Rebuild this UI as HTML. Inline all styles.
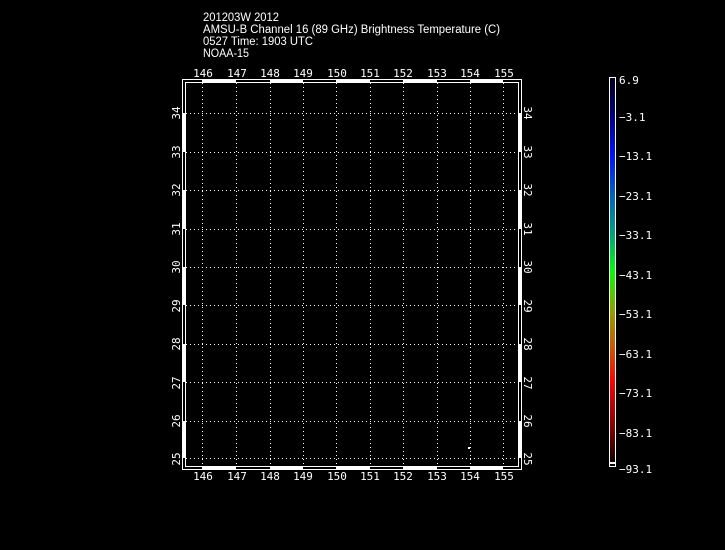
<!DOCTYPE html>
<html><head><style>
html,body{margin:0;padding:0;background:#000;width:725px;height:550px;overflow:hidden}
svg text{font-family:"DejaVu Sans Mono","Liberation Mono",monospace;font-size:11px;fill:#fff}
svg text.t{font-family:"Liberation Sans",sans-serif;font-size:11.5px}
</style></head><body>
<svg width="725" height="550" xmlns="http://www.w3.org/2000/svg">
<defs>
<linearGradient id="cb" x1="0" y1="0" x2="0" y2="1">
<stop offset="0" stop-color="#000018"/>
<stop offset="0.1" stop-color="#000080"/>
<stop offset="0.2" stop-color="#0010ff"/>
<stop offset="0.3" stop-color="#0060c0"/>
<stop offset="0.4" stop-color="#00a080"/>
<stop offset="0.5" stop-color="#00ff00"/>
<stop offset="0.6" stop-color="#90a000"/>
<stop offset="0.7" stop-color="#d05000"/>
<stop offset="0.78" stop-color="#ff0000"/>
<stop offset="0.9" stop-color="#800000"/>
<stop offset="1" stop-color="#000000"/>
</linearGradient>
</defs>
<text class="t" x="203" y="21" textLength="76" lengthAdjust="spacingAndGlyphs">201203W 2012</text>
<text class="t" x="203" y="33" textLength="297" lengthAdjust="spacingAndGlyphs">AMSU-B Channel 16 (89 GHz) Brightness Temperature (C)</text>
<text class="t" x="203" y="45" textLength="110" lengthAdjust="spacingAndGlyphs">0527 Time: 1903 UTC</text>
<text class="t" x="203" y="57" textLength="46" lengthAdjust="spacingAndGlyphs">NOAA-15</text>
<g fill="none" stroke="#fff" stroke-width="1">
<rect x="182.5" y="79.5" width="339" height="390"/>
<rect x="185.5" y="82.5" width="333" height="384"/>
</g>
<g fill="#fff">
<rect x="202" y="79" width="34" height="4"/><rect x="270" y="79" width="33" height="4"/><rect x="336" y="79" width="34" height="4"/><rect x="403" y="79" width="34" height="4"/><rect x="470" y="79" width="33" height="4"/>
<rect x="202" y="466" width="34" height="4"/><rect x="270" y="466" width="33" height="4"/><rect x="336" y="466" width="34" height="4"/><rect x="403" y="466" width="34" height="4"/><rect x="470" y="466" width="33" height="4"/>
<rect x="182" y="113" width="4" height="39"/><rect x="182" y="190" width="4" height="39"/><rect x="182" y="267" width="4" height="38"/><rect x="182" y="344" width="4" height="38"/><rect x="182" y="421" width="4" height="37"/>
<rect x="518" y="113" width="4" height="39"/><rect x="518" y="190" width="4" height="39"/><rect x="518" y="267" width="4" height="38"/><rect x="518" y="344" width="4" height="38"/><rect x="518" y="421" width="4" height="37"/>
<rect x="468" y="447" width="2" height="2"/>
</g>
<g stroke="#fff" stroke-width="1" stroke-dasharray="1,3">
<path d="M202.5 83V466M236.5 83V466M270.5 83V466M303.5 83V466M336.5 83V466M370.5 83V466M403.5 83V466M437.5 83V466M470.5 83V466M503.5 83V466"/>
<path d="M186 113.5H518M186 152.5H518M186 190.5H518M186 229.5H518M186 267.5H518M186 305.5H518M186 344.5H518M186 382.5H518M186 421.5H518M186 458.5H518"/>
</g>
<g text-anchor="middle">
<text x="203" y="77">146</text><text x="237" y="77">147</text><text x="270" y="77">148</text><text x="303" y="77">149</text><text x="337" y="77">150</text><text x="370" y="77">151</text><text x="403" y="77">152</text><text x="437" y="77">153</text><text x="470" y="77">154</text><text x="504" y="77">155</text>
<text x="203" y="480">146</text><text x="237" y="480">147</text><text x="270" y="480">148</text><text x="303" y="480">149</text><text x="337" y="480">150</text><text x="370" y="480">151</text><text x="403" y="480">152</text><text x="437" y="480">153</text><text x="470" y="480">154</text><text x="504" y="480">155</text>
</g>
<g text-anchor="middle">
<text transform="translate(180,113) rotate(-90)">34</text><text transform="translate(180,152) rotate(-90)">33</text><text transform="translate(180,190) rotate(-90)">32</text><text transform="translate(180,229) rotate(-90)">31</text><text transform="translate(180,267) rotate(-90)">30</text><text transform="translate(180,306) rotate(-90)">29</text><text transform="translate(180,344) rotate(-90)">28</text><text transform="translate(180,383) rotate(-90)">27</text><text transform="translate(180,421) rotate(-90)">26</text><text transform="translate(180,459) rotate(-90)">25</text>
<text transform="translate(524,113) rotate(90)">34</text><text transform="translate(524,152) rotate(90)">33</text><text transform="translate(524,190) rotate(90)">32</text><text transform="translate(524,229) rotate(90)">31</text><text transform="translate(524,267) rotate(90)">30</text><text transform="translate(524,306) rotate(90)">29</text><text transform="translate(524,344) rotate(90)">28</text><text transform="translate(524,383) rotate(90)">27</text><text transform="translate(524,421) rotate(90)">26</text><text transform="translate(524,459) rotate(90)">25</text>
</g>
<rect x="609.5" y="77.5" width="6" height="389" fill="url(#cb)" stroke="#fff"/>
<rect x="609" y="462" width="7" height="2" fill="#fff"/>
<g>
<text x="619" y="84">6.9</text><text x="619" y="121">−3.1</text><text x="619" y="160">−13.1</text><text x="619" y="200">−23.1</text><text x="619" y="239">−33.1</text><text x="619" y="279">−43.1</text><text x="619" y="318">−53.1</text><text x="619" y="358">−63.1</text><text x="619" y="397">−73.1</text><text x="619" y="437">−83.1</text><text x="619" y="473">−93.1</text>
</g>
</svg>
</body></html>
